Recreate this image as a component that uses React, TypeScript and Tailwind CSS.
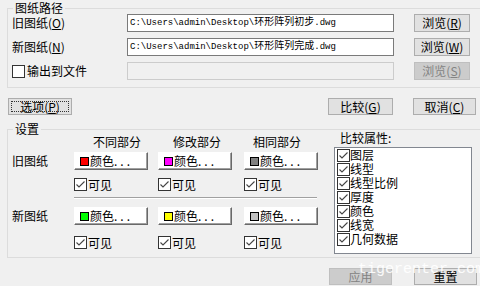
import React from "react";
import clsx from "clsx";

const UI = "font-['Microsoft_YaHei','Noto_Sans_CJK_SC',sans-serif]";
const MONO = "font-['Liberation_Mono','Noto_Sans_CJK_SC',monospace]";

function U({ c }: { c: string }) {
  return <span className="underline underline-offset-[1px]">{c}</span>;
}

function Btn({
  children,
  className,
  disabled,
  focused,
}: {
  children: React.ReactNode;
  className?: string;
  disabled?: boolean;
  focused?: boolean;
}) {
  return (
    <button
      type="button"
      disabled={disabled}
      className={clsx(
        "relative flex items-center justify-center border text-[12px] leading-none",
        disabled
          ? "border-[#bfbfbf] bg-[#cccccc] text-[#838383]"
          : "border-[#adadad] bg-[#e1e1e1] text-black",
        focused && "border-[#0078d7]",
        className,
      )}
    >
      {focused && (
        <span className="absolute inset-[2px] border border-dotted border-[#333]" />
      )}
      {children}
    </button>
  );
}

function Check({ checked }: { checked?: boolean }) {
  return (
    <span className="flex h-[13px] w-[13px] shrink-0 items-center justify-center border border-[#333] bg-white">
      {checked && (
        <svg width="11" height="11" viewBox="0 0 11 11">
          <path d="M1.5 5.5L4 8L9.5 2.5" fill="none" stroke="#444" strokeWidth="1.1" />
        </svg>
      )}
    </span>
  );
}

function ColorBtn({ swatch }: { swatch: string }) {
  return (
    <button
      type="button"
      className="flex h-[18px] w-[74px] items-center border border-t-white border-l-white border-r-[#696969] border-b-[#696969] bg-white pl-[5px] text-[12px] leading-none shadow-[inset_-1px_-1px_0_#a0a0a0]"
    >
      <span className={clsx("h-[9px] w-[9px] border border-black", swatch)} />
      <span className="ml-[1px]">
        颜色<span className="tracking-[3px]">...</span>
      </span>
    </button>
  );
}

function Visible() {
  return (
    <div className="flex h-[13px] w-[74px] items-center">
      <Check checked />
      <span className="ml-[1px] leading-none">可见</span>
    </div>
  );
}

function PathRow({
  label,
  path,
  btn,
}: {
  label: React.ReactNode;
  path: React.ReactNode;
  btn: string;
}) {
  return (
    <div className="flex h-[18px] items-center">
      <div className="w-[115px] leading-none">{label}</div>
      <div className="flex h-[18px] w-[267px] items-center border border-[#7a7a7a] bg-white pl-[2px] text-[9px] leading-none">
        {path}
      </div>
      <Btn className="ml-[20px] h-[18px] w-[56px]">
        浏览(<U c={btn} />)
      </Btn>
    </div>
  );
}

const attrs = ["图层", "线型", "线型比例", "厚度", "颜色", "线宽", "几何数据"];

export default function App() {
  return (
    <div className={clsx("relative h-[286px] w-[480px] overflow-hidden bg-[#f0f0f0] text-[12px] text-black", UI)}>
      {/* 图纸路径 */}
      <div className="relative ml-[7px] mt-[8px] w-[480px] border border-[#dcdcdc] pb-[7px] pl-[4px] pt-[5px]">
        <span className="absolute left-[5px] top-[-9px] bg-[#f0f0f0] px-[2px] leading-[16px]">图纸路径</span>
        <div className="flex flex-col gap-[6px]">
          <PathRow
            label={<>旧图纸(<U c="O" />)</>}
            path={
              <span className={MONO}>
                C:\Users\admin\Desktop\<span className="text-[10px]">环形阵列初步</span>.dwg
              </span>
            }
            btn="R"
          />
          <PathRow
            label={<>新图纸(<U c="N" />)</>}
            path={
              <span className={MONO}>
                C:\Users\admin\Desktop\<span className="text-[10px]">环形阵列完成</span>.dwg
              </span>
            }
            btn="W"
          />
          <div className="flex h-[18px] items-center">
            <div className="flex w-[115px] items-center">
              <Check />
              <span className="ml-[2px] leading-none">输出到文件</span>
            </div>
            <div className="h-[18px] w-[267px] border border-[#cccccc] bg-[#f0f0f0]" />
            <Btn disabled className="ml-[20px] h-[18px] w-[56px]">
              浏览(<U c="S" />)
            </Btn>
          </div>
        </div>
      </div>

      {/* buttons */}
      <div className="ml-[8px] mt-[10px] flex h-[17px]">
        <Btn focused className="w-[64px]">
          选项(<U c="P" />)
        </Btn>
        <Btn className="ml-[256px] w-[65px]">
          比较(<U c="G" />)
        </Btn>
        <Btn className="ml-[20px] w-[63px]">
          取消(<U c="C" />)
        </Btn>
      </div>

      {/* 设置 */}
      <div className="relative ml-[7px] mt-[14px] flex h-[129px] w-[480px] border border-[#dcdcdc]">
        <span className="absolute left-[5px] top-[-9px] bg-[#f0f0f0] px-[2px] leading-[16px]">设置</span>
        <div className="w-[326px] pl-[4px] pt-[4px]">
          <div className="flex h-[16px] items-center pl-[81px] leading-none">
            <span className="w-[80px]">不同部分</span>
            <span className="w-[80px]">修改部分</span>
            <span className="w-[80px]">相同部分</span>
          </div>
          <div className="mt-[2px] flex items-center">
            <span className="w-[62px] leading-none">旧图纸</span>
            <div className="grid grid-cols-[84px_86px_74px]">
              <ColorBtn swatch="bg-[#ff0000]" />
              <ColorBtn swatch="bg-[#ff00ff]" />
              <ColorBtn swatch="bg-[#808080]" />
            </div>
          </div>
          <div className="ml-[62px] mt-[8px] grid grid-cols-[84px_86px_74px]">
            <Visible />
            <Visible />
            <Visible />
          </div>
          <div className="ml-[62px] mt-[6px] h-[2px] w-[243px] border-t border-b border-t-[#a0a0a0] border-b-white" />
          <div className="mt-[8px] flex items-center">
            <span className="w-[62px] leading-none">新图纸</span>
            <div className="grid grid-cols-[84px_86px_74px]">
              <ColorBtn swatch="bg-[#00ff00]" />
              <ColorBtn swatch="bg-[#ffff00]" />
              <ColorBtn swatch="bg-[#c0c0c0]" />
            </div>
          </div>
          <div className="ml-[62px] mt-[11px] grid grid-cols-[84px_86px_74px]">
            <Visible />
            <Visible />
            <Visible />
          </div>
        </div>
        <div className="flex flex-col">
          <span className="ml-[6px] leading-[16px]">比较属性:</span>
          <div className="mt-[1px] h-[107px] w-[138px] border border-[#828790] bg-white pl-[2px]">
            {attrs.map((a) => (
              <div key={a} className="flex h-[14px] items-center">
                <Check checked />
                <span className="leading-none">{a}</span>
              </div>
            ))}
          </div>
        </div>
      </div>

      {/* bottom */}
      <div className="mt-[10px] flex h-[17px]">
        <Btn disabled className="ml-[329px] w-[63px]">
          应用
        </Btn>
        <Btn className="ml-[22px] w-[63px]">重置</Btn>
      </div>

      <span className={clsx("pointer-events-none absolute left-[358px] top-[262px] text-[15px] leading-[15px] text-white/90", MONO)}>
        tigerenter.com
      </span>
    </div>
  );
}
